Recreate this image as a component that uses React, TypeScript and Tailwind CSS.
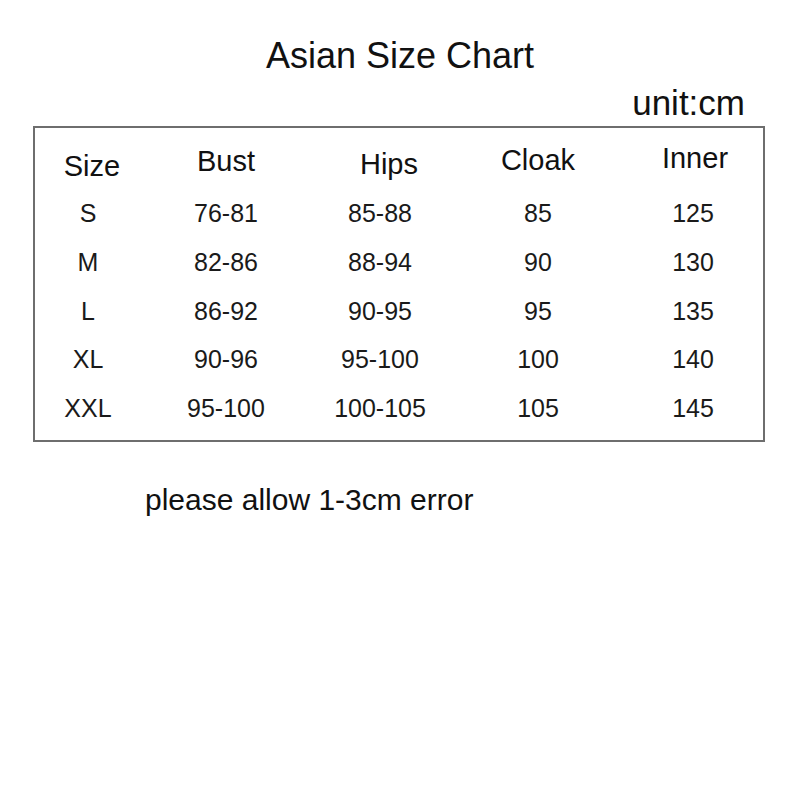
const rows = [
  ["S", "76-81", "85-88", "85", "125"],
  ["M", "82-86", "88-94", "90", "130"],
  ["L", "86-92", "90-95", "95", "135"],
  ["XL", "90-96", "95-100", "100", "140"],
  ["XXL", "95-100", "100-105", "105", "145"],
];

export default function App() {
  return (
    <div className="w-[800px] h-[800px] bg-white text-[#111] font-['Liberation_Sans',Arial,sans-serif]">
      <h1 className="pt-[38px] text-center text-[36px] leading-none font-normal">
        Asian Size Chart
      </h1>
      <div className="mt-[11px] pr-[55px] text-right text-[35px] leading-none">
        unit:cm
      </div>

      {/* size table */}
      <div className="mt-[6px] ml-[33px] w-[732px] border-2 border-[#6e6e6e] pb-[7px]">
        <div className="grid h-[61px] grid-cols-[106px_170px_138px_178px_132px] items-start text-center text-[29px] leading-none">
          <div className="pt-[24px] pl-2">Size</div>
          <div className="pt-[19px]">Bust</div>
          <div className="pt-[22px] pl-[18px]">Hips</div>
          <div className="pt-[18px]">Cloak</div>
          <div className="pt-[16px] pl-1">Inner</div>
        </div>
        {rows.map((r) => (
          <div
            key={r[0]}
            className="grid grid-cols-[106px_170px_138px_178px_132px] text-center text-[25px] leading-[48.75px] text-[#1a1a1a]"
          >
            <div>{r[0]}</div>
            <div>{r[1]}</div>
            <div>{r[2]}</div>
            <div>{r[3]}</div>
            <div>{r[4]}</div>
          </div>
        ))}
      </div>

      <p className="mt-[43px] pl-[145px] text-[30px] leading-none">
        please allow 1-3cm error
      </p>
    </div>
  );
}
